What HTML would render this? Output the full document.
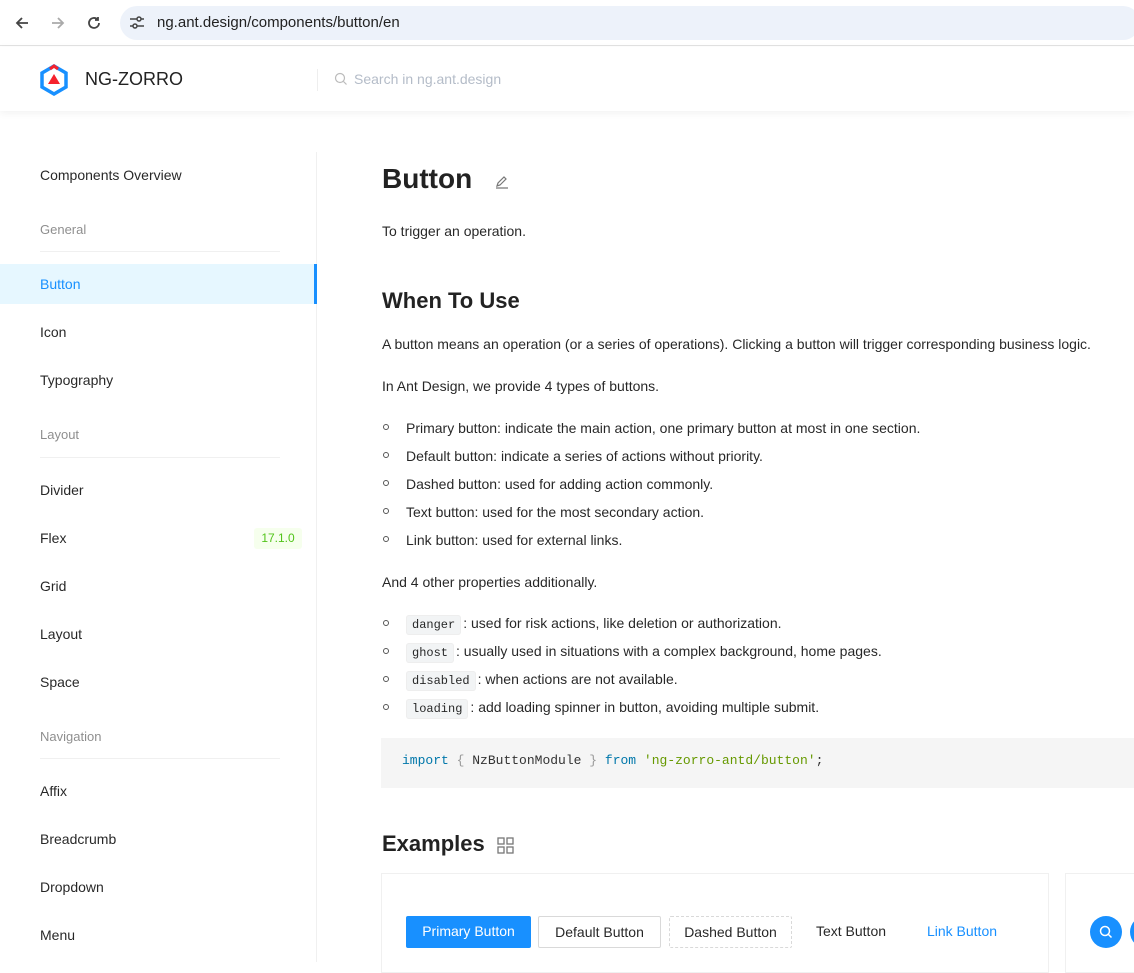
<!DOCTYPE html>
<html><head><meta charset="utf-8"><style>
*{margin:0;padding:0;box-sizing:border-box}
body{width:1134px;height:962px;overflow:hidden;background:#fff;font-family:"Liberation Sans",sans-serif;color:rgba(0,0,0,.85);position:relative;font-size:14px}
.a{position:absolute;white-space:nowrap}
.chrome{position:absolute;left:0;top:0;width:1134px;height:46px;background:#fff;border-bottom:1px solid #e3e3e3}
.url{position:absolute;left:120px;top:6px;width:1020px;height:34px;border-radius:17px;background:#edf2fa}
.hdr{position:absolute;left:0;top:47px;width:1134px;height:64px;background:#fff;box-shadow:0 2px 8px rgba(0,0,0,.06)}
.side{position:absolute;left:0;top:152px;width:317px;height:810px;border-right:1px solid #f0f0f0}
.it{position:absolute;left:40px;font-size:14px;color:rgba(0,0,0,.85)}
.grp{position:absolute;left:40px;font-size:13px;color:rgba(0,0,0,.45)}
.ln{position:absolute;left:40px;width:240px;height:1px;background:#f0f0f0}
.p{position:absolute;left:382px;font-size:14px;white-space:nowrap}
.li{position:absolute;left:406px;font-size:14px;white-space:nowrap}
.dot{position:absolute;left:383px;width:6px;height:6px;border:1px solid #555;border-radius:50%}
code{font-family:"Liberation Mono",monospace;font-size:12px;background:#f2f4f5;border:1px solid #eee;border-radius:3px;padding:2px 5px;margin-right:2px}
.btn{position:absolute;top:916px;height:32px;font-size:14px;line-height:30px;text-align:center;border-radius:2px}
</style></head><body>
<div class="chrome">
<svg class="a" style="left:13px;top:14px" width="18" height="18" viewBox="0 0 18 18"><path d="M15 9H4M9 4L4 9l5 5" stroke="#444" stroke-width="1.8" fill="none"/></svg>
<svg class="a" style="left:49px;top:14px" width="18" height="18" viewBox="0 0 18 18"><path d="M3 9h11M9 4l5 5-5 5" stroke="#aaa" stroke-width="1.8" fill="none"/></svg>
<svg class="a" style="left:85px;top:14px" width="18" height="18" viewBox="0 0 18 18"><path d="M14 9a5 5 0 1 1-1.5-3.6M13 3v3h-3" stroke="#444" stroke-width="1.8" fill="none"/></svg>
<div class="url"></div>
<svg class="a" style="left:129px;top:15px" width="16" height="16" viewBox="0 0 16 16"><path d="M1 4h7M12 4h3M1 11h3M8 11h7" stroke="#444" stroke-width="1.5"/><circle cx="10" cy="4" r="2" fill="none" stroke="#444" stroke-width="1.5"/><circle cx="6" cy="11" r="2" fill="none" stroke="#444" stroke-width="1.5"/></svg>
<div class="a" style="left:157px;top:14px;font-size:15px;color:#222">ng.ant.design/components/button/en</div>
</div>
<div class="hdr">
<svg class="a" style="left:38px;top:17px" width="32" height="32" viewBox="0 0 32 32"><path d="M16 2L28 9v14l-12 7-12-7V9z" fill="none" stroke="#1890ff" stroke-width="3.5"/><path d="M16 10l6 10H10z" fill="#f5222d"/><path d="M12 5l4-3 4 3" stroke="#f5222d" stroke-width="3" fill="none"/></svg>
<div class="a" style="left:85px;top:22px;font-size:18px;color:#222">NG-ZORRO</div>
<div class="a" style="left:317px;top:22px;width:1px;height:22px;background:#eee"></div>
<svg class="a" style="left:334px;top:25px" width="14" height="14" viewBox="0 0 14 14"><circle cx="6" cy="6" r="4.5" fill="none" stroke="#bbb" stroke-width="1.2"/><path d="M9.5 9.5l3 3" stroke="#bbb" stroke-width="1.2"/></svg>
<div class="a" style="left:354px;top:24px;font-size:14px;color:#b4bcc8">Search in ng.ant.design</div>
</div>
<div class="side"></div>
<div class="it" style="top:167px">Components Overview</div>
<div class="grp" style="top:222px">General</div><div class="ln" style="top:251px"></div>
<div class="a" style="left:0;top:264px;width:317px;height:40px;background:#e6f7ff;border-right:3px solid #1890ff"></div>
<div class="it" style="top:276px;color:#1890ff">Button</div>
<div class="it" style="top:324px">Icon</div>
<div class="it" style="top:372px">Typography</div>
<div class="grp" style="top:427px">Layout</div><div class="ln" style="top:457px"></div>
<div class="it" style="top:482px">Divider</div>
<div class="it" style="top:530px">Flex</div>
<div class="a" style="left:254px;top:528px;width:48px;height:21px;background:#f6ffed;border-radius:3px;color:#52c41a;font-size:12px;text-align:center;line-height:21px">17.1.0</div>
<div class="it" style="top:578px">Grid</div>
<div class="it" style="top:626px">Layout</div>
<div class="it" style="top:674px">Space</div>
<div class="grp" style="top:729px">Navigation</div><div class="ln" style="top:758px"></div>
<div class="it" style="top:783px">Affix</div>
<div class="it" style="top:831px">Breadcrumb</div>
<div class="it" style="top:879px">Dropdown</div>
<div class="it" style="top:927px">Menu</div>

<div class="p" style="top:163px;font-size:28px;font-weight:bold;color:#222">Button</div>
<svg class="a" style="left:494px;top:174px" width="16" height="16" viewBox="0 0 16 16"><path d="M3 12l1-3 6-6 2 2-6 6zM2 14h12" stroke="#777" stroke-width="1.2" fill="none"/></svg>
<div class="p" style="top:223px">To trigger an operation.</div>
<div class="p" style="top:288px;font-size:22px;font-weight:bold;color:#222">When To Use</div>
<div class="p" style="top:336px">A button means an operation (or a series of operations). Clicking a button will trigger corresponding business logic.</div>
<div class="p" style="top:378px">In Ant Design, we provide 4 types of buttons.</div>
<div class="dot" style="top:424px"></div><div class="li" style="top:420px">Primary button: indicate the main action, one primary button at most in one section.</div>
<div class="dot" style="top:452px"></div><div class="li" style="top:448px">Default button: indicate a series of actions without priority.</div>
<div class="dot" style="top:480px"></div><div class="li" style="top:476px">Dashed button: used for adding action commonly.</div>
<div class="dot" style="top:508px"></div><div class="li" style="top:504px">Text button: used for the most secondary action.</div>
<div class="dot" style="top:536px"></div><div class="li" style="top:532px">Link button: used for external links.</div>
<div class="p" style="top:574px">And 4 other properties additionally.</div>
<div class="dot" style="top:620px"></div><div class="li" style="top:615px"><code>danger</code>: used for risk actions, like deletion or authorization.</div>
<div class="dot" style="top:648px"></div><div class="li" style="top:643px"><code>ghost</code>: usually used in situations with a complex background, home pages.</div>
<div class="dot" style="top:676px"></div><div class="li" style="top:671px"><code>disabled</code>: when actions are not available.</div>
<div class="dot" style="top:704px"></div><div class="li" style="top:699px"><code>loading</code>: add loading spinner in button, avoiding multiple submit.</div>
<div class="a" style="left:381px;top:738px;width:760px;height:50px;background:#f5f5f5"></div>
<div class="a" style="left:402px;top:753px;font-family:'Liberation Mono',monospace;font-size:13px;color:#333"><span style="color:#0077aa">import</span> <span style="color:#999">{</span> NzButtonModule <span style="color:#999">}</span> <span style="color:#0077aa">from</span> <span style="color:#669900">'ng-zorro-antd/button'</span>;</div>
<div class="p" style="top:831px;font-size:22px;font-weight:bold;color:#222">Examples</div>
<svg class="a" style="left:497px;top:837px" width="17" height="17" viewBox="0 0 17 17" fill="none" stroke="#777" stroke-width="1.3"><rect x="1" y="1" width="6" height="6"/><rect x="10" y="1" width="6" height="6"/><rect x="1" y="10" width="6" height="6"/><rect x="10" y="10" width="6" height="6"/></svg>
<div class="a" style="left:381px;top:873px;width:668px;height:100px;border:1px solid #f0f0f0"></div>
<div class="a" style="left:1065px;top:873px;width:80px;height:100px;border:1px solid #f0f0f0"></div>
<div class="btn" style="left:406px;width:125px;background:#1890ff;color:#fff">Primary Button</div>
<div class="btn" style="left:538px;width:123px;border:1px solid #d9d9d9">Default Button</div>
<div class="btn" style="left:669px;width:123px;border:1px dashed #d9d9d9">Dashed Button</div>
<div class="btn" style="left:800px;width:102px">Text Button</div>
<div class="btn" style="left:912px;width:100px;color:#1890ff">Link Button</div>
<div class="a" style="left:1090px;top:916px;width:32px;height:32px;border-radius:50%;background:#1890ff"></div>
<svg class="a" style="left:1098px;top:924px" width="16" height="16" viewBox="0 0 16 16"><circle cx="7" cy="7" r="4.5" fill="none" stroke="#fff" stroke-width="1.5"/><path d="M10.5 10.5l3 3" stroke="#fff" stroke-width="1.5"/></svg>
<div class="a" style="left:1130px;top:916px;width:32px;height:32px;border-radius:50%;background:#1890ff"></div>
</body></html>
